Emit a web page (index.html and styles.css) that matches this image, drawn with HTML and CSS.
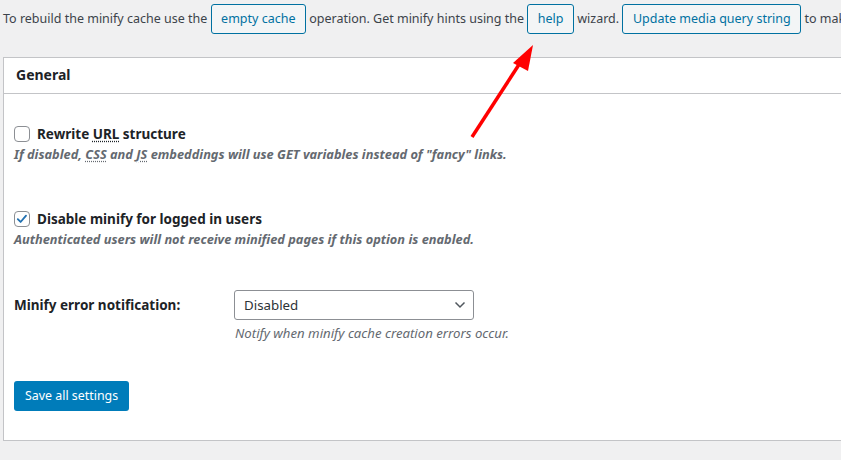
FILE: index.html
```html
<!DOCTYPE html>
<html>
<head>
<meta charset="utf-8">
<link rel="stylesheet" href="styles.css">
</head>
<body>
<div class="page">
  <p class="intro">To rebuild the minify cache use the <span class="btn">empty cache</span> operation. Get minify hints using the <span class="btn">help</span> wizard. <span class="btn">Update media query string</span> to make existing caches obsolete.</p>

  <div class="panel">
    <h3 class="panel-head">General</h3>
    <div class="panel-body">
      <div class="check-row">
        <label class="check-label"><span class="cb"></span><span>Rewrite <abbr>URL</abbr> structure</span></label>
        <p class="note">If disabled, <abbr>CSS</abbr> and <abbr class="wavy">JS</abbr> embeddings will use GET variables instead of "fancy" links.</p>
      </div>
      <div class="check-row second">
        <label class="check-label"><span class="cb checked"><svg viewBox="0 0 16 16" width="14" height="14"><path d="M3.2 8.2 L6.4 11.4 L12.6 4.2" fill="none" stroke="#2271b1" stroke-width="2.1" stroke-linecap="round" stroke-linejoin="round"/></svg></span><span>Disable minify for logged in users</span></label>
        <p class="note">Authenticated users will not receive minified pages if this option is enabled.</p>
      </div>
      <div class="field-row">
        <div class="field-label">Minify error notification:</div>
        <div class="field-ctrl">
          <div class="select"><span>Disabled</span><svg viewBox="0 0 12 8" width="12" height="8"><path d="M1.5 1.5 L6 6 L10.5 1.5" fill="none" stroke="#50575e" stroke-width="1.5"/></svg></div>
          <p class="plain-note">Notify when minify cache creation errors occur.</p>
        </div>
      </div>
      <div class="save-row"><span class="btn-primary">Save all settings</span></div>
    </div>
  </div>

  <svg class="arrow" width="841" height="460" viewBox="0 0 841 460">
    <line x1="472" y1="137" x2="520" y2="63" stroke="#ff0000" stroke-width="3.5"/>
    <polygon points="533,45 513,63 528,71" fill="#ff0000"/>
  </svg>
</div>
</body>
</html>
```

FILE: styles.css
```css
html, body {
  margin: 0;
  padding: 0;
  background: #f0f0f1;
  overflow: hidden;
  width: 841px;
  height: 460px;
}
body {
  font-family: "Noto Sans", "DejaVu Sans", sans-serif;
  color: #3c434a;
  font-size: 13px;
}
.page {
  position: relative;
  padding-left: 3px;
  width: 1200px;
}
.intro {
  margin: 0;
  padding-top: 4px;
  height: 30px;
  line-height: 30px;
  white-space: nowrap;
  font-size: 12.5px;
}
.btn {
  display: inline-block;
  box-sizing: border-box;
  height: 30px;
  line-height: 28px;
  padding: 0 9.5px;
  border: 1px solid #0071a1;
  border-radius: 3px;
  background: #f3f5f6;
  color: #0071a1;
  vertical-align: top;
}
.panel {
  margin-top: 23px;
  background: #fff;
  border: 1px solid #c3c4c7;
  width: 1000px;
  height: 384px;
  box-sizing: border-box;
}
.panel-head {
  margin: 0;
  height: 35px;
  line-height: 34px;
  padding-left: 12px;
  font-size: 14px;
  font-weight: 700;
  color: #1d2327;
  border-bottom: 1px solid #c3c4c7;
}
.panel-body {
  padding-left: 10px;
}
.check-row {
  padding-top: 31px;
}
.check-row.second {
  padding-top: 47px;
}
.check-label {
  display: flex;
  align-items: center;
  gap: 7px;
  font-size: 13.5px;
  font-weight: 700;
  color: #1d2327;
  height: 18px;
}
.cb {
  box-sizing: border-box;
  width: 16px;
  height: 16px;
  border: 1px solid #8c8f94;
  border-radius: 4px;
  background: #fff;
  display: flex;
  align-items: center;
  justify-content: center;
}
abbr {
  text-decoration: underline dotted;
  text-underline-offset: 2px;
}
.note {
  margin: 2px 0 0 0;
  font-size: 12.8px;
  font-style: italic;
  font-weight: 700;
  color: #646970;
  line-height: 18px;
}
.field-row {
  display: flex;
  padding-top: 42px;
}
.field-label {
  width: 220px;
  font-size: 13.5px;
  font-weight: 700;
  color: #1d2327;
  line-height: 30px;
}
.select {
  box-sizing: border-box;
  width: 240px;
  height: 30px;
  border: 1px solid #8c8f94;
  border-radius: 3px;
  display: flex;
  align-items: center;
  justify-content: space-between;
  padding: 0 7px 0 9px;
  font-size: 13.3px;
  color: #2c3338;
}
.plain-note {
  margin: 3px 0 0 1px;
  font-size: 13.2px;
  font-style: italic;
  color: #646970;
  line-height: 20px;
}
.save-row {
  padding-top: 38px;
}
.btn-primary {
  display: inline-block;
  box-sizing: border-box;
  height: 30px;
  line-height: 30px;
  padding: 0 11px;
  background: #007cba;
  color: #fff;
  border-radius: 3px;
  font-size: 12.4px;
}
.arrow {
  position: absolute;
  left: 0;
  top: 0;
  pointer-events: none;
}
```
